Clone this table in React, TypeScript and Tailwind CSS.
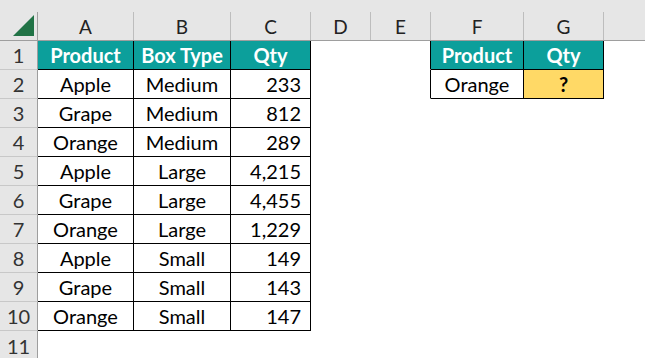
import React from 'react';

type Cell = {
  text?: string;
  align?: 'left' | 'center' | 'right';
  bold?: boolean;
  bg?: string;
  border?: boolean;
  borderLeft?: boolean;
};

const colWidths = ['w-[38px]', 'w-[96px]', 'w-[97px]', 'w-[80px]', 'w-[60px]', 'w-[60px]', 'w-[93px]', 'w-[80px]', 'flex-1'];
const letters = ['A', 'B', 'C', 'D', 'E', 'F', 'G', ''];

const data: [string, string, string][] = [
  ['Apple', 'Medium', '233'],
  ['Grape', 'Medium', '812'],
  ['Orange', 'Medium', '289'],
  ['Apple', 'Large', '4,215'],
  ['Grape', 'Large', '4,455'],
  ['Orange', 'Large', '1,229'],
  ['Apple', 'Small', '149'],
  ['Grape', 'Small', '143'],
  ['Orange', 'Small', '147'],
];

const teal = 'bg-[#0c9f9b]';

const buildRows = (): Cell[][] => {
  const rows: Cell[][] = [];
  rows.push([
    { text: 'Product', align: 'center', bold: true, bg: teal, border: true },
    { text: 'Box Type', align: 'center', bold: true, bg: teal, border: true },
    { text: 'Qty', align: 'center', bold: true, bg: teal, border: true },
    {},
    { borderLeft: true },
    { text: 'Product', align: 'center', bold: true, bg: teal, border: true },
    { text: 'Qty', align: 'center', bold: true, bg: teal, border: true },
    {},
  ]);
  data.forEach(([p, b, q], i) => {
    const row: Cell[] = [
      { text: p, align: 'center', border: true },
      { text: b, align: 'center', border: true },
      { text: q, align: 'right', border: true },
      {},
    ];
    if (i === 0) {
      row.push(
        { borderLeft: true },
        { text: 'Orange', align: 'center', border: true },
        { text: '?', align: 'center', bold: true, bg: 'bg-[#ffd966]', border: true },
        {}
      );
    } else {
      row.push({}, {}, {}, {});
    }
    rows.push(row);
  });
  return rows;
};

const DataCell = ({ cell, width }: { cell: Cell; width: string }) => {
  const align =
    cell.align === 'right' ? 'justify-end pr-[9px]' : cell.align === 'left' ? 'justify-start pl-1' : 'justify-center';
  const border = cell.border || cell.borderLeft ? 'border-r border-b border-black' : 'border-r border-b border-transparent';
  const bottom = cell.borderLeft ? 'border-b-transparent' : '';
  return (
    <div
      className={`${width} h-full shrink-0 flex items-center ${align} ${border} ${bottom} ${cell.bg ?? ''} ${
        cell.bold ? 'font-bold' : ''
      } ${cell.bg === teal ? 'text-white' : 'text-black'}`}
    >
      {cell.text}
    </div>
  );
};

export default function App() {
  const rows = buildRows();
  return (
    <div className="w-[645px] h-[358px] overflow-hidden bg-white text-[20px] leading-none font-['Lato','Liberation_Sans',sans-serif]">
      {/* column headers */}
      <div className="flex h-[41px] bg-[#e6e6e6] border-b border-[#9e9e9e]">
        <div className="w-[38px] shrink-0 flex flex-col">
          <div className="h-[12px]" />
          <div className="flex-1 border-r border-[#9e9e9e] flex items-end justify-end pr-[3px] pb-[4px]">
            <svg width="21" height="21" viewBox="0 0 21 21">
              <polygon points="21,0 21,21 0,21" fill="#217346" />
            </svg>
          </div>
        </div>
        {letters.map((l, i) => (
          <div key={i} className={`${colWidths[i + 1]} shrink-0 flex flex-col`}>
            <div className="h-[12px]" />
            <div
              className={`flex-1 flex items-center justify-center pt-[1px] text-[19px] text-[#222] ${
                l ? 'border-r border-[#bdbdbd]' : ''
              }`}
            >
              {l}
            </div>
          </div>
        ))}
      </div>
      {rows.map((row, r) => (
        <div key={r} className="flex h-[29px]">
          <div className="w-[38px] shrink-0 bg-[#e6e6e6] border-r border-b border-r-[#9e9e9e] border-b-[#c8c8c8] flex items-center justify-center text-[#333]">
            {r + 1}
          </div>
          {row.map((cell, c) => (
            <DataCell key={c} cell={cell} width={colWidths[c + 1]} />
          ))}
        </div>
      ))}
      <div className="flex h-[29px]">
        <div className="w-[38px] shrink-0 bg-[#e6e6e6] border-r border-[#9e9e9e] flex items-center justify-center text-[#333]">
          11
        </div>
      </div>
    </div>
  );
}
